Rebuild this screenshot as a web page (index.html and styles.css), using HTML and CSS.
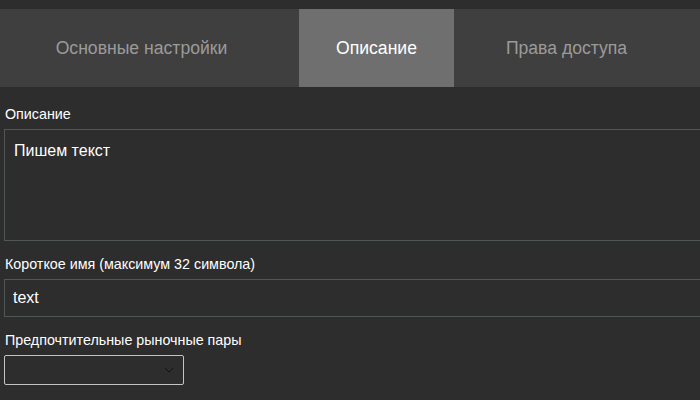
FILE: index.html
```html
<!DOCTYPE html>
<html lang="ru">
<head>
<meta charset="utf-8">
<link rel="stylesheet" href="styles.css">
</head>
<body>
<div class="page">
  <nav class="tabs">
    <div class="tab tab-main">Основные настройки</div>
    <div class="tab tab-desc active">Описание</div>
    <div class="tab tab-access">Права доступа</div>
  </nav>
  <form class="form">
    <label class="label label-first">Описание</label>
    <div class="textarea">Пишем текст</div>
    <label class="label">Короткое имя (максимум 32 символа)</label>
    <div class="input">text</div>
    <label class="label">Предпочтительные рыночные пары</label>
    <div class="select">
      <svg class="chevron" width="10" height="6" viewBox="0 0 10 6"><path d="M1 1 L5 5 L9 1" fill="none" stroke="#111" stroke-width="1"/></svg>
    </div>
  </form>
</div>
</body>
</html>
```
FILE: styles.css
```css
html, body {
  margin: 0;
  padding: 0;
  background: #2d2d2d;
  overflow: hidden;
  font-family: "Liberation Sans", Arial, sans-serif;
}
.page {
  width: 740px;
  padding-top: 9px;
}
.tabs {
  display: flex;
  height: 78px;
  background: #3f3f3f;
}
.tab {
  box-sizing: border-box;
  display: flex;
  align-items: center;
  justify-content: center;
  font-size: 17.6px;
  color: #9b9b9b;
}
.tab-main { width: 299px; padding-right: 16px; }
.tab-desc { width: 155px; }
.tab-access { width: 225px; }
.tab.active {
  background: #6f6f6f;
  color: #ffffff;
}
.form {
  display: flex;
  flex-direction: column;
  align-items: flex-start;
  padding-left: 4px;
}
.label {
  font-size: 14.3px;
  line-height: 16px;
  color: #ffffff;
  margin: 15px 0 7px 1px;
}
.label-first {
  margin-top: 19px;
}
.textarea {
  box-sizing: border-box;
  width: 720px;
  height: 112px;
  border: 1px solid #515656;
  padding: 12px 9px;
  font-size: 16px;
  line-height: 18px;
  color: #ffffff;
}
.input {
  box-sizing: border-box;
  width: 720px;
  height: 38px;
  border: 1px solid #515656;
  padding: 0 8px;
  display: flex;
  align-items: center;
  font-size: 16px;
  color: #ffffff;
}
.select {
  box-sizing: border-box;
  width: 180px;
  height: 30px;
  border: 1px solid #c4c4c4;
  border-radius: 2px;
  display: flex;
  align-items: center;
  justify-content: flex-end;
  padding-right: 9px;
}
.chevron {
  display: block;
}
```
